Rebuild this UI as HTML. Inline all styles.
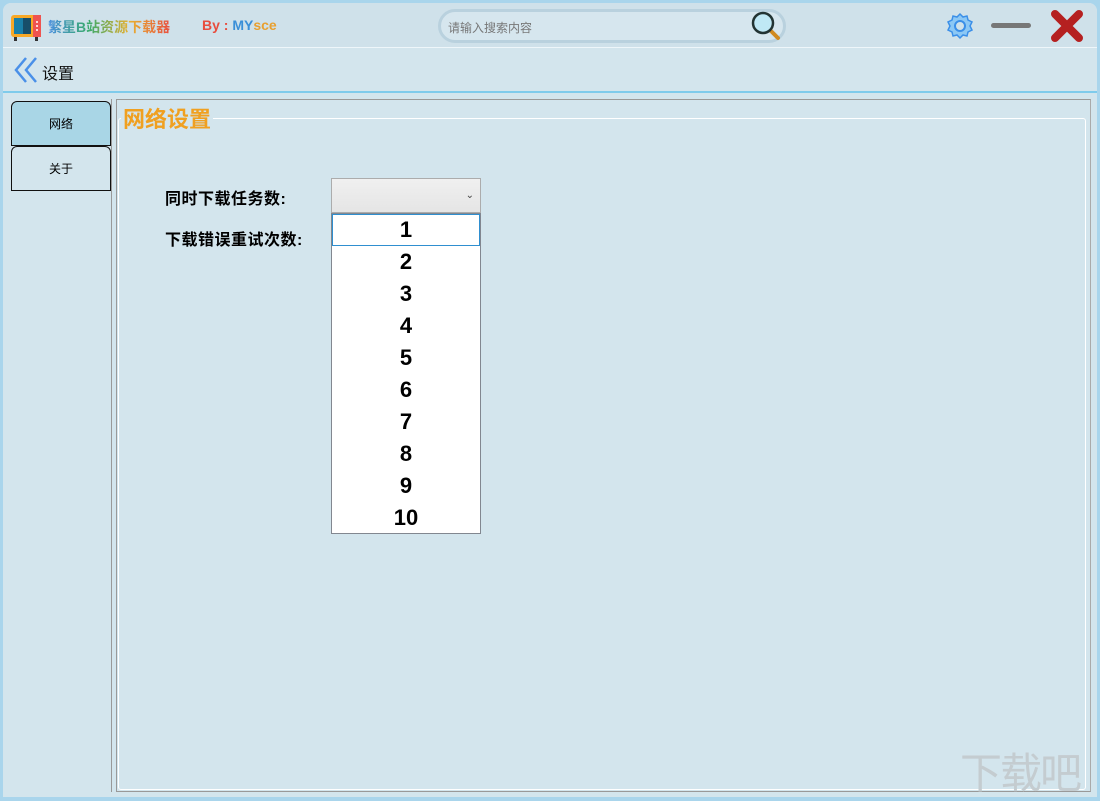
<!DOCTYPE html>
<html><head><meta charset="utf-8"><style>
*{margin:0;padding:0;box-sizing:border-box}
body{width:1100px;height:800px;background:#a9d5ec;font-family:"Liberation Sans","Noto Sans CJK SC",sans-serif;position:relative;overflow:hidden}
.win{position:absolute;left:3px;top:3px;width:1094px;height:794px;background:#d3e5ed;border-radius:8px 8px 0 0}
.abs{position:absolute}
</style></head><body>
<div class="win"></div>
<div class="abs" style="left:3px;top:3px;width:1094px;height:45px;background:#cfe1ea;border-radius:8px 8px 0 0"></div>
<div class="abs" style="left:3px;top:47px;width:1094px;height:1px;background:#eef6fa"></div>
<svg class="abs" style="left:10px;top:14px" width="32" height="28"><rect x="1" y="1" width="30" height="22" rx="3" fill="#f9a825"/><rect x="4" y="4" width="17" height="16" fill="#1a7fa8"/><rect x="13" y="4" width="8" height="16" fill="#174e6a"/><rect x="23" y="1" width="8" height="22" fill="#ef5350"/><rect x="4" y="23" width="3" height="4" fill="#333"/><rect x="25" y="23" width="3" height="4" fill="#333"/><circle cx="27" cy="8" r="1" fill="#fff"/><circle cx="27" cy="12" r="1" fill="#fff"/><circle cx="27" cy="16" r="1" fill="#fff"/></svg>
<div class="abs" style="left:48px;top:17px;font-size:14px;font-weight:bold;background:linear-gradient(90deg,#4a8fe0,#3aaa6c,#e8b030,#e85040);-webkit-background-clip:text;color:transparent">繁星B站资源下载器</div>
<div class="abs" style="left:202px;top:17px;font-size:14px;font-weight:bold"><span style="color:#e84c3d">By : </span><span style="color:#3a8fd8">MY</span><span style="color:#e8a030">sce</span></div>
<div class="abs" style="left:438px;top:9px;width:348px;height:34px;border:3px solid #b9d1de;border-radius:17px;background:#d6e6ee"></div>
<div class="abs" style="left:448px;top:19px;font-size:12px;color:#777">请输入搜索内容</div>
<svg class="abs" style="left:750px;top:10px" width="32" height="32"><line x1="18" y1="18" x2="28" y2="28" stroke="#d08a20" stroke-width="4" stroke-linecap="round"/><circle cx="13" cy="13" r="10" fill="#bfe8f5" stroke="#233" stroke-width="2.5"/></svg>
<svg class="abs" style="left:946px;top:12px" width="28" height="28" viewBox="0 0 28 28"><path d="M14 2l3 3 4-1 1 4 4 2-2 4 2 4-4 2-1 4-4-1-3 3-3-3-4 1-1-4-4-2 2-4-2-4 4-2 1-4 4 1z" fill="#8cc8f5" stroke="#3b8fe8" stroke-width="1.5"/><circle cx="14" cy="14" r="5" fill="#cfe1ea" stroke="#3b8fe8" stroke-width="2"/></svg>
<div class="abs" style="left:991px;top:23px;width:40px;height:5px;border-radius:3px;background:#777"></div>
<svg class="abs" style="left:1050px;top:9px" width="34" height="34"><path d="M5 5L29 29M29 5L5 29" stroke="#b52020" stroke-width="8" stroke-linecap="round"/></svg>
<svg class="abs" style="left:13px;top:56px" width="26" height="28"><path d="M13 2L3 14L13 26M23 2L13 14L23 26" fill="none" stroke="#4a90e8" stroke-width="2.5"/></svg>
<div class="abs" style="left:42px;top:60px;font-size:16px;color:#111">设置</div>
<div class="abs" style="left:3px;top:91px;width:1094px;height:2px;background:#7fcbeb"></div>
<div class="abs" style="left:111px;top:99px;width:1px;height:693px;background:#999"></div>
<div class="abs" style="left:11px;top:101px;width:100px;height:45px;background:#a9d6e6;border:1px solid #111;border-radius:6px 6px 0 0;font-size:12px;text-align:center;line-height:44px">网络</div>
<div class="abs" style="left:11px;top:146px;width:100px;height:45px;border:1px solid #111;border-radius:6px 6px 0 0;font-size:12px;text-align:center;line-height:44px">关于</div>
<div class="abs" style="left:116px;top:99px;width:975px;height:693px;border:1px solid #999;border-right-color:#aaa"></div>
<div class="abs" style="left:118px;top:118px;width:968px;height:672px;border:1px solid #fff;border-radius:3px"></div>
<div class="abs" style="left:121px;top:102px;padding:0 2px;background:#d3e5ed;font-size:22px;font-weight:bold;color:#f0a020">网络设置</div>
<div class="abs" style="left:165px;top:185px;font-size:16px;font-weight:bold;letter-spacing:0.5px">同时下载任务数:</div>
<div class="abs" style="left:165px;top:226px;font-size:16px;font-weight:bold;letter-spacing:0.5px">下载错误重试次数:</div>
<div class="abs" style="left:331px;top:178px;width:150px;height:35px;border:1px solid #acacac;background:linear-gradient(#f0f0f0,#e5e5e5);font-size:10px;color:#444;text-align:right;padding-right:6px;line-height:33px">⌄</div>
<div class="abs" style="left:331px;top:213px;width:150px;height:321px;background:#fff;border:1px solid #828790;font-size:22px;font-weight:bold;text-align:center;line-height:32px">
<div style="border:1px solid #2f8fd0;line-height:30px">1</div><div>2</div><div>3</div><div>4</div><div>5</div><div>6</div><div>7</div><div>8</div><div>9</div><div>10</div></div>
<div class="abs" style="left:960px;top:740px;font-size:42px;color:#c4ccd0;letter-spacing:-2px">下载吧</div>
</body></html>
